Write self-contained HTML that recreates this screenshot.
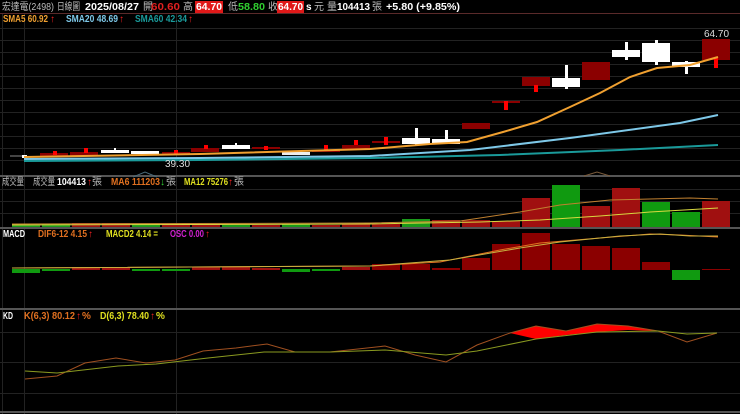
<!DOCTYPE html>
<html><head><meta charset="utf-8"><style>
html,body{margin:0;padding:0;background:#000;width:740px;height:414px;overflow:hidden}
svg{display:block}
text{font-family:"Liberation Sans","Noto Sans CJK TC",sans-serif;font-size:10px}
</style></head><body>
<svg width="740" height="414" viewBox="0 0 740 414">
<rect width="740" height="414" fill="#000"/>
<g stroke="#222" stroke-width="1">
<line x1="0" y1="28.5" x2="740" y2="28.5"/><line x1="0" y1="40.5" x2="740" y2="40.5"/><line x1="0" y1="52.5" x2="740" y2="52.5"/><line x1="0" y1="64.5" x2="740" y2="64.5"/><line x1="0" y1="76.5" x2="740" y2="76.5"/><line x1="0" y1="88.5" x2="740" y2="88.5"/><line x1="0" y1="100.5" x2="740" y2="100.5"/><line x1="0" y1="112.5" x2="740" y2="112.5"/><line x1="0" y1="124.5" x2="740" y2="124.5"/><line x1="0" y1="136.5" x2="740" y2="136.5"/><line x1="0" y1="148.5" x2="740" y2="148.5"/><line x1="0" y1="160.5" x2="740" y2="160.5"/>
<line x1="0" y1="189.5" x2="740" y2="189.5"/><line x1="0" y1="201.5" x2="740" y2="201.5"/><line x1="0" y1="213.5" x2="740" y2="213.5"/>
<line x1="0" y1="332.5" x2="740" y2="332.5"/><line x1="0" y1="362.5" x2="740" y2="362.5"/><line x1="0" y1="393.5" x2="740" y2="393.5"/>
<line x1="24.5" y1="14" x2="24.5" y2="414"/><line x1="176.5" y1="14" x2="176.5" y2="414"/>
<line x1="2.5" y1="14" x2="2.5" y2="414"/>
</g>
<line x1="0" y1="13.5" x2="740" y2="13.5" stroke="#5a2a2a"/>
<line x1="0" y1="176" x2="740" y2="176" stroke="#555" stroke-width="2"/>
<line x1="0" y1="228" x2="740" y2="228" stroke="#555" stroke-width="2"/>
<line x1="0" y1="309" x2="740" y2="309" stroke="#555" stroke-width="2"/>
<line x1="0" y1="412" x2="740" y2="412" stroke="#555" stroke-width="2"/>
<path d="M133 177 L145 172 L157 177" stroke="#4a6a7a" fill="none"/>
<path d="M584 176 L597 172 L610 176" stroke="#7a5a3a" fill="none"/>

<g>
<rect x="22" y="155" width="5" height="3" fill="#fff"/><line x1="10" y1="156" x2="22" y2="156" stroke="#888"/>
<rect x="40" y="153" width="28" height="3" fill="#8b0000"/><rect x="53" y="151" width="4" height="4" fill="#f00"/>
<rect x="70" y="152" width="28" height="4" fill="#8b0000"/><rect x="84" y="148" width="4" height="5" fill="#f00"/>
<rect x="101" y="150" width="28" height="3" fill="#fff"/><rect x="114" y="148" width="2" height="5" fill="#fff"/>
<rect x="131" y="151" width="28" height="3" fill="#fff"/>
<rect x="162" y="152" width="28" height="2" fill="#8b0000"/><rect x="174" y="150" width="4" height="4" fill="#f00"/>
<rect x="191" y="148" width="28" height="4" fill="#8b0000"/><rect x="204" y="145" width="4" height="4" fill="#f00"/>
<rect x="222" y="145" width="28" height="4" fill="#fff"/><rect x="235" y="143" width="2" height="3" fill="#fff"/>
<rect x="252" y="147" width="28" height="2" fill="#8b0000"/><rect x="264" y="146" width="4" height="4" fill="#f00"/>
<rect x="282" y="152" width="28" height="3" fill="#eee"/>
<rect x="312" y="150" width="28" height="2" fill="#8b0000"/><rect x="324" y="145" width="4" height="5" fill="#f00"/>
<rect x="342" y="145" width="28" height="5" fill="#8b0000"/><rect x="354" y="140" width="4" height="5" fill="#f00"/>
<rect x="372" y="141" width="28" height="2" fill="#8b0000"/><rect x="384" y="137" width="4" height="8" fill="#f00"/>
<rect x="402" y="138" width="28" height="6" fill="#fff"/><rect x="415" y="128" width="3" height="17" fill="#fff"/>
<rect x="432" y="139" width="28" height="5" fill="#fff"/><rect x="445" y="130" width="3" height="10" fill="#fff"/>
<rect x="462" y="123" width="28" height="6" fill="#8b0000"/>
<rect x="492" y="101" width="28" height="2" fill="#8b0000"/><rect x="504" y="101" width="4" height="9" fill="#f00"/>
<rect x="522" y="77" width="28" height="9" fill="#8b0000"/><rect x="534" y="85" width="4" height="7" fill="#f00"/>
<rect x="552" y="78" width="28" height="9" fill="#fff"/><rect x="565" y="65" width="3" height="24" fill="#fff"/>
<rect x="582" y="62" width="28" height="18" fill="#8b0000"/>
<rect x="612" y="50" width="28" height="7" fill="#fff"/><rect x="625" y="42" width="3" height="18" fill="#fff"/>
<rect x="642" y="43" width="28" height="19" fill="#fff"/><rect x="655" y="40" width="3" height="25" fill="#fff"/>
<rect x="672" y="62" width="28" height="5" fill="#fff"/><rect x="685" y="61" width="3" height="13" fill="#fff"/>
<rect x="702" y="39" width="28" height="21" fill="#8b0000"/><rect x="714" y="58" width="4" height="10" fill="#f00"/>
</g>
<polyline fill="none" stroke="#1a9a9a" stroke-width="2" points="24,161 200,160 370,158 500,155 620,150 718,145"/>
<polyline fill="none" stroke="#7ec8e8" stroke-width="2" points="24,159 200,158 370,156 470,150 570,138 680,123 718,115"/>
<polyline fill="none" stroke="#f0a030" stroke-width="2" points="24,157 200,154 370,149 430,144 467,142 503,132 537,122 570,107 600,93 630,77 657,68 690,65 718,57"/>
<text x="704" y="37" fill="#ddd" font-size="9">64.70</text>
<text x="165" y="167" fill="#ddd" font-size="9">39.30</text>

<g>
<rect x="12" y="225" width="28" height="2" fill="#1a9a1a"/><rect x="42" y="224" width="28" height="3" fill="#1a9a1a"/>
<rect x="72" y="223" width="28" height="4" fill="#a01010"/><rect x="102" y="223" width="28" height="4" fill="#a01010"/>
<rect x="132" y="224" width="28" height="3" fill="#1a9a1a"/><rect x="162" y="224" width="28" height="3" fill="#a01010"/>
<rect x="192" y="224" width="28" height="3" fill="#a01010"/><rect x="222" y="225" width="28" height="2" fill="#1a9a1a"/>
<rect x="252" y="225" width="28" height="2" fill="#a01010"/><rect x="282" y="224" width="28" height="3" fill="#1a9a1a"/>
<rect x="312" y="225" width="28" height="2" fill="#a01010"/><rect x="342" y="224" width="28" height="3" fill="#a01010"/>
<rect x="372" y="224" width="28" height="3" fill="#a01010"/><rect x="402" y="219" width="28" height="8" fill="#1a9a1a"/>
<rect x="432" y="220" width="28" height="7" fill="#a01010"/><rect x="462" y="220" width="28" height="7" fill="#a01010"/>
<rect x="492" y="221" width="28" height="6" fill="#a01010"/><rect x="522" y="198" width="28" height="29" fill="#a01010"/>
<rect x="552" y="185" width="28" height="42" fill="#109a10"/><rect x="582" y="206" width="28" height="21" fill="#a01010"/>
<rect x="612" y="188" width="28" height="39" fill="#a01010"/><rect x="642" y="202" width="28" height="25" fill="#109a10"/>
<rect x="672" y="212" width="28" height="15" fill="#109a10"/><rect x="702" y="201" width="28" height="26" fill="#a01010"/>
</g>
<polyline fill="none" stroke="#c08030" stroke-width="1" points="12,224 370,223 460,221 520,212 560,205 610,200 650,199 690,198 718,199"/>
<polyline fill="none" stroke="#d8d840" stroke-width="1" points="12,225 370,224 480,222 540,220 600,216 650,212 718,208"/>

<g>
<rect x="12" y="269" width="28" height="4" fill="#109a10"/><rect x="42" y="269" width="28" height="2" fill="#109a10"/>
<rect x="72" y="267" width="28" height="3" fill="#a01010"/><rect x="102" y="267" width="28" height="3" fill="#a01010"/>
<rect x="132" y="269" width="28" height="2" fill="#109a10"/><rect x="162" y="269" width="28" height="2" fill="#109a10"/>
<rect x="192" y="267" width="28" height="3" fill="#a01010"/><rect x="222" y="267" width="28" height="3" fill="#a01010"/>
<rect x="252" y="268" width="28" height="2" fill="#a01010"/><rect x="282" y="269" width="28" height="3" fill="#109a10"/>
<rect x="312" y="269" width="28" height="2" fill="#109a10"/><rect x="342" y="267" width="28" height="3" fill="#a01010"/>
<rect x="372" y="264" width="28" height="6" fill="#8b0000"/><rect x="402" y="264" width="28" height="6" fill="#8b0000"/>
<rect x="432" y="268" width="28" height="2" fill="#8b0000"/><rect x="462" y="258" width="28" height="12" fill="#8b0000"/>
<rect x="492" y="244" width="28" height="26" fill="#8b0000"/><rect x="522" y="233" width="28" height="37" fill="#8b0000"/>
<rect x="552" y="244" width="28" height="26" fill="#8b0000"/><rect x="582" y="246" width="28" height="24" fill="#8b0000"/>
<rect x="612" y="248" width="28" height="22" fill="#8b0000"/><rect x="642" y="262" width="28" height="8" fill="#8b0000"/>
<rect x="672" y="270" width="28" height="10" fill="#109a10"/><rect x="702" y="269" width="28" height="1" fill="#8b0000"/>
</g>
<polyline fill="none" stroke="#e07020" stroke-width="1" points="12,268 370,266 440,262 500,250 540,243 600,238 650,234 680,235 718,237"/>
<polyline fill="none" stroke="#c8b040" stroke-width="1" points="12,268 370,266 450,260 520,248 560,242 620,236 660,234 690,236 718,236"/>

<path d="M510,333 L536,326 L566,331 L597,324 L628,326 L658,331 L628,330 L597,332 L566,335 L536,339 Z" fill="#f00"/>
<polyline fill="none" stroke="#a05020" stroke-width="1" points="25,379 57,376 85,363 116,358 146,363 175,360 203,351 236,348 267,344 295,352 330,352 385,346 415,355 446,362 477,345 510,333 536,326 566,331 597,324 628,326 658,331 687,342 717,333"/>
<polyline fill="none" stroke="#8a9a20" stroke-width="1" points="25,371 57,373 118,366 156,364 208,358 264,352 330,352 385,350 446,355 477,351 536,339 597,332 658,331 687,334 717,333"/>

<g lengthAdjust="spacingAndGlyphs">
<text x="2" y="10" fill="#bbb" font-size="9" textLength="52" lengthAdjust="spacingAndGlyphs">宏達電(2498)</text>
<text x="57" y="10" fill="#bbb" font-size="9" textLength="23" lengthAdjust="spacingAndGlyphs">日線圖</text>
<text x="85" y="10" fill="#fff" font-weight="bold" textLength="54" lengthAdjust="spacingAndGlyphs">2025/08/27</text>
<text x="143" y="10" fill="#bbb" font-size="9">開</text>
<text x="151" y="10" fill="#e02020" font-weight="bold" textLength="29" lengthAdjust="spacingAndGlyphs">60.60</text>
<text x="183" y="10" fill="#bbb" font-size="9">高</text>
<rect x="195" y="1" width="28" height="12" fill="#e01818"/>
<text x="196" y="10" fill="#fff" font-weight="bold" textLength="26" lengthAdjust="spacingAndGlyphs">64.70</text>
<text x="228" y="10" fill="#bbb" font-size="9">低</text>
<text x="238" y="10" fill="#30d030" font-weight="bold" textLength="27" lengthAdjust="spacingAndGlyphs">58.80</text>
<text x="268" y="10" fill="#bbb" font-size="9">收</text>
<rect x="277" y="1" width="27" height="12" fill="#e01818"/>
<text x="278" y="10" fill="#fff" font-weight="bold" textLength="25" lengthAdjust="spacingAndGlyphs">64.70</text>
<text x="306" y="10" fill="#fff" font-weight="bold" font-size="8">s</text>
<text x="314" y="10" fill="#bbb" font-size="9">元</text>
<text x="327" y="10" fill="#bbb" font-size="9">量</text>
<text x="337" y="10" fill="#fff" font-weight="bold" textLength="33" lengthAdjust="spacingAndGlyphs">104413</text>
<text x="372" y="10" fill="#bbb" font-size="9">張</text>
<text x="386" y="10" fill="#fff" font-weight="bold" textLength="74" lengthAdjust="spacingAndGlyphs">+5.80 (+9.85%)</text>

<text x="3" y="22" fill="#f0a030" font-size="9" font-weight="bold" textLength="45" lengthAdjust="spacingAndGlyphs">SMA5 60.92</text><text x="50" y="22" fill="#f02020" font-size="9">↑</text>
<text x="66" y="22" fill="#7ec8e8" font-size="9" font-weight="bold" textLength="52" lengthAdjust="spacingAndGlyphs">SMA20 48.69</text><text x="119" y="22" fill="#f02020" font-size="9">↑</text>
<text x="135" y="22" fill="#1a9a9a" font-size="9" font-weight="bold" textLength="52" lengthAdjust="spacingAndGlyphs">SMA60 42.34</text><text x="188" y="22" fill="#f02020" font-size="9">↑</text>

<text x="2" y="185" fill="#bbb" font-size="8" textLength="22" lengthAdjust="spacingAndGlyphs">成交量</text>
<text x="33" y="185" fill="#bbb" font-size="8" textLength="22" lengthAdjust="spacingAndGlyphs">成交量</text>
<text x="57" y="185" fill="#fff" font-size="9" font-weight="bold" textLength="29" lengthAdjust="spacingAndGlyphs">104413</text>
<text x="87" y="185" fill="#f02020" font-size="8">↑</text><text x="92" y="185" fill="#bbb" font-size="7">張</text>
<text x="111" y="185" fill="#e07020" font-size="9" font-weight="bold" textLength="49" lengthAdjust="spacingAndGlyphs">MA6 111203</text>
<text x="160" y="185" fill="#30d030" font-size="8">↓</text><text x="166" y="185" fill="#bbb" font-size="7">張</text>
<text x="184" y="185" fill="#e0e020" font-size="9" font-weight="bold" textLength="44" lengthAdjust="spacingAndGlyphs">MA12 75276</text>
<text x="228" y="185" fill="#f02020" font-size="8">↑</text><text x="234" y="185" fill="#bbb" font-size="7">張</text>

<text x="3" y="237" fill="#fff" font-size="9" font-weight="bold" textLength="22" lengthAdjust="spacingAndGlyphs">MACD</text>
<text x="38" y="237" fill="#e07020" font-size="9" font-weight="bold" textLength="49" lengthAdjust="spacingAndGlyphs">DIF6-12 4.15</text><text x="88" y="237" fill="#f02020" font-size="8">↑</text>
<text x="106" y="237" fill="#e0e020" font-size="9" font-weight="bold" textLength="52" lengthAdjust="spacingAndGlyphs">MACD2 4.14 =</text>
<text x="170" y="237" fill="#d020d0" font-size="9" font-weight="bold" textLength="34" lengthAdjust="spacingAndGlyphs">OSC 0.00</text><text x="205" y="237" fill="#f02020" font-size="8">↑</text>

<text x="3" y="319" fill="#fff" font-size="9" font-weight="bold" textLength="10" lengthAdjust="spacingAndGlyphs">KD</text>
<text x="24" y="319" fill="#e07020" font-size="9" font-weight="bold" textLength="51" lengthAdjust="spacingAndGlyphs">K(6,3) 80.12</text><text x="76" y="319" fill="#f02020" font-size="8">↑</text><text x="82" y="319" fill="#e07020" font-size="9" font-weight="bold">%</text>
<text x="100" y="319" fill="#e0e020" font-size="9" font-weight="bold" textLength="49" lengthAdjust="spacingAndGlyphs">D(6,3) 78.40</text><text x="150" y="319" fill="#f02020" font-size="8">↑</text><text x="156" y="319" fill="#e0e020" font-size="9" font-weight="bold">%</text>
</g>
</svg>
</body></html>
